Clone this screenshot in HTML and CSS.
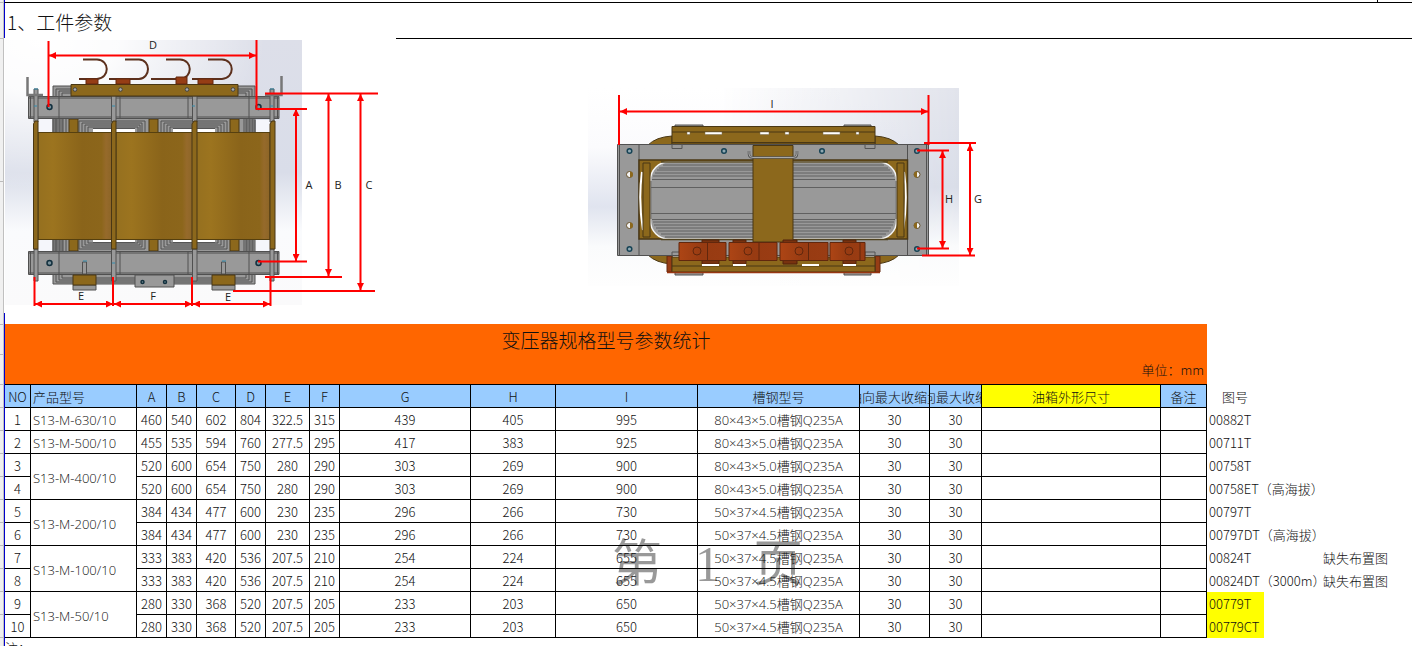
FILE: index.html
```html
<!DOCTYPE html>
<html lang="zh-CN">
<head>
<meta charset="utf-8">
<title>变压器规格型号参数统计</title>
<link rel="stylesheet" href="styles.css">
</head>
<body>
<div class="workbook">
<div class="row-headers" aria-hidden="true"><i class="h-first"></i><i class="h-title"></i><i class="h-figure"></i><i class="h-figure"></i><i class="h-banner"></i><i class="h-banner"></i><i></i><i></i><i></i><i></i><i></i><i></i><i></i><i></i><i></i><i></i><i></i><i></i></div>
<main class="sheet">
<div class="previous-row"></div>
<h1 class="section-title">1、工件参数</h1>
<section class="figures">
<svg class="front-view" viewBox="4 38 392 275" width="392" height="275" role="img" aria-label="变压器正视图">
<defs>
<linearGradient id="bg1" x1="0" y1="0" x2="0" y2="1"><stop offset="0" stop-color="#dddfe9"/><stop offset=".5" stop-color="#d9dde9"/><stop offset=".72" stop-color="#fafbfd"/><stop offset="1" stop-color="#fafafb"/></linearGradient>
<radialGradient id="bg2" gradientUnits="userSpaceOnUse" cx="40" cy="40" r="150" gradientTransform="translate(-20 0) scale(1.5 1)"><stop offset="0" stop-color="#fff"/><stop offset=".35" stop-color="#fff" stop-opacity=".9"/><stop offset="1" stop-color="#fff" stop-opacity="0"/></radialGradient>
<linearGradient id="coil"><stop offset="0" stop-color="#95701f"/><stop offset=".2" stop-color="#9c741f"/><stop offset=".6" stop-color="#8a641a"/><stop offset=".86" stop-color="#8c661b"/><stop offset=".92" stop-color="#966a2b"/><stop offset="1" stop-color="#8c6526"/></linearGradient>
<marker id="arrow" viewBox="0 0 6 6" refX="6" refY="3" markerWidth="7" markerHeight="7" markerUnits="userSpaceOnUse" orient="auto-start-reverse"><path d="M0 0L6 3L0 6z" fill="#f00"/></marker>
</defs>
<path d="M5 40H302V305H5z" fill="url(#bg1)"/><path d="M5 40H302V305H5z" fill="url(#bg2)"/>
<g class="steel"><path d="M53 86H255V284H53z"/><path d="M56 89H252V282H56zM59 91H249V280H59zM62 93H246V278H62z"/><path d="M55 119V251M57 119V251M60 119V251M63 119V251M66 119V251M244 119V251M247 119V251M250 119V251M253 119V251"/><path d="M79 121H145V249H79zM82 123H142V247H82zM85 125H140V245H85zM88 127H138V243H88zM161 121H227V249H161zM164 123H224V247H164zM167 125H221V245H167zM170 127H218V243H170z"/></g>
<path d="M93 129H135V242H93zM173 129H215V242H173z" fill="#fff"/>
<path d="M93 128.500H135M173 128.500H215M93 242.500H135M173 242.500H215M53 119V251M40 120V132M255 120V132" stroke="#555"/>
<path d="M39 120H52V132H39zM39 240H52V251H39zM256 120H270V132H256zM256 240H270V251H256z" fill="#f5f6fb"/>
<g class="brass"><path d="M69 119H78V251H69zM149 119H158V251H149zM230 119H239V251H230z"/></g>
<g fill="url(#coil)" stroke="#56400f"><path d="M38 132.500H112V239.500H38z"/><path d="M116 132.500H193V239.500H116z"/><path d="M196 132.500H270V239.500H196z"/></g>
<g class="steel"><path d="M28.500 96.500H279V118.500H28.500zM28.500 251.500H279V274.500H28.500z"/><path d="M28 98H279M28 117H279M28 253H279M28 273H279M30.500 96V119M59 96V119M120 96V119M188 96V119M249 96V119M277.500 96V119M30.500 251V275M59 251V275M120 251V275M188 251V275M249 251V275M277.500 251V275"/><path d="M34 89H38V122H34zM111.500 96H116V122H111.500zM192.500 96H197V122H192.500zM270 89H274V122H270zM34 249H38V281H34zM111.500 249H116V281H111.500zM192.500 249H197V281H192.500zM270 249H274V281H270z"/><path d="M82.500 262H86.500V274H82.500zM221.500 262H225.500V274H221.500z"/><path d="M73 285H96V290H73zM212 285H235V290H212zM135 275H174V287H135z"/></g>
<g class="brass"><path d="M71 84.500H238V96H71z"/><path d="M33.500 124L35 121H38V249H33.500zM111.500 124L113 121H116V249H111.500zM192 124L194 121H197V249H192zM270 124L272 121H275V249H270z"/><path d="M73 275H96V285H73zM212 275H235V285H212z"/></g>
<g class="hook"><path d="M83 59.500H97C110 60 110 78 97 79H79"/><path d="M125 59.500H139C151 60 151 78 139 79H109"/><path d="M166 59.500H180C193 60 193 78 180 79H151"/><path d="M208 59.500H222C235 60 235 78 222 79H192"/></g>
<path d="M86 79H98V84H86zM116 79H130V84H116zM176 77H187V84H176zM198 79H213V84H198z" fill="#963d15" stroke="#65290f"/>
<path d="M27.500 77V95H43M281.500 76V95H265" fill="none" stroke="#777" stroke-width="2.500"/>
<path d="M34 89H38M270 89H274M34 106H37M112 106H115M192 106H195M270 106H273M112 263H115M83 261H87M222 261H226" stroke="#328cad"/>
<g fill="#aaa" stroke="#444"><circle cx="75" cy="89.500" r="1.800"/><circle cx="120.500" cy="89.500" r="1.800"/><circle cx="187" cy="89.500" r="1.800"/><circle cx="233" cy="89.500" r="1.800"/></g>
<g fill="#78909a" stroke="#122f3d" stroke-width="1.500"><circle cx="49.500" cy="107" r="2.500"/><circle cx="258.500" cy="107" r="2.500"/><circle cx="49.500" cy="263" r="2.500"/><circle cx="258.500" cy="263" r="2.500"/><circle cx="142.500" cy="282" r="1.500"/><circle cx="165" cy="282" r="1.500"/></g>
<g class="leader"><path d="M48.500 41V107M256.500 40V109H307M265 93.500H378M258 261.500H307M265 277H342M233 291H375M34.500 277V306M113 277V306M192 277V306M270.500 276V306"/></g>
<g class="dimension"><path d="M49 55.500H256"/><path d="M296 109V261"/><path d="M328.500 94V276"/><path d="M360.500 94V290"/><path d="M35 304H113"/><path d="M114 304H192"/><path d="M193 304H270"/></g>
<g class="label"><text x="153" y="49">D</text><text x="309" y="189">A</text><text x="338" y="189">B</text><text x="369" y="189">C</text><text x="81" y="300">E</text><text x="153" y="300">F</text><text x="228" y="301">E</text></g>
</svg>
<div class="right-cells">
<svg class="top-view" viewBox="588 88 410 200" width="410" height="200" role="img" aria-label="变压器俯视图">
<defs>
<linearGradient id="bg3" x1="0" y1="0" x2="0" y2="1"><stop offset="0" stop-color="#fff"/><stop offset=".3" stop-color="#fbfbfd"/><stop offset=".6" stop-color="#e0e4ef"/><stop offset=".8" stop-color="#fafbfc"/><stop offset="1" stop-color="#fefefe"/></linearGradient>
<linearGradient id="bg4" x1="0" y1="0" x2="0" y2="1"><stop offset="0" stop-color="#e2e4ec"/><stop offset=".5" stop-color="#d9dde8"/><stop offset=".8" stop-color="#fafbfc"/><stop offset="1" stop-color="#fefefe"/></linearGradient>
<linearGradient id="fade"><stop offset="0" stop-color="#fff" stop-opacity="0"/><stop offset="1" stop-color="#fff"/></linearGradient>
<mask id="right-fade"><path d="M720 88H959V286H720z" fill="url(#fade)"/></mask>
<linearGradient id="terminal"><stop offset="0" stop-color="#ad4515"/><stop offset=".5" stop-color="#973b12"/><stop offset="1" stop-color="#9a3c13"/></linearGradient>
</defs>
<path d="M588 88H959V286H588z" fill="url(#bg3)"/><path d="M720 88H959V286H720z" fill="url(#bg4)" mask="url(#right-fade)"/>
<g class="brass"><path d="M648 145Q656 137 672 136V145zM899 145Q891 137 875 136V145zM648 255Q656 263 672 264V255zM899 255Q891 263 875 264V255z"/></g>
<g class="steel"><path d="M675 125H703V128H675zM844 125H871V128H844zM675 271H703V275H675zM844 271H871V275H844z"/></g>
<path d="M667 256H672V272H667zM875 256H880V272H875z" fill="#963d15" stroke="#65290f"/>
<g class="brass"><path d="M672 126.500H875V144H672zM672 257H875V272H672z"/><path d="M672 132H875M672 142.500H875M672 266H875"/></g>
<path d="M667 272.500H880" stroke="#973611" stroke-width="1.500"/>
<path d="M705 132H722V134.500H705zM760 132H769V134.500H760zM785 132H789V134.500H785zM687 132H690V134.500H687zM823 132H840V134.500H823zM856 132H859V134.500H856z" fill="#fff" stroke="#75694c" stroke-width=".5"/>
<g class="steel"><path d="M617.500 144.500H928.500V255.500H617.500z"/><path d="M619.500 144V256M926.500 144V256M639 144V256M907.500 144V256"/></g>
<path d="M639 160H907.500V239H639z" fill="#8c681c" stroke="#493714" stroke-width="1.500"/>
<path d="M642 172Q638 200 643 230M904 172Q908 200 903 230" fill="none" stroke="#fff" stroke-width="2"/>
<rect x="650.500" y="162" width="246" height="77" rx="18" fill="#999" stroke="#f4f4f4" stroke-width="1.500"/>
<g stroke="#606060"><path d="M663 165H884M659 168H888M657 170H890M655 173H892M653 176H894M652 179.500H895M651 187.500H896M651 213.500H896M652 219.500H895M653 222H894M654 225H893M656 228H891M658 231H889M661 234H886M665 237H882M651 181V219M896 181V219"/></g>
<path d="M661 162H888M661 239.500H888" stroke="#4f421f" stroke-width="1.500"/>
<g class="brass"><path d="M643 163H650V237H643zM897 163H904V237H897z"/><path d="M753 145.500H793V242H753z"/><path d="M753 157.500H793"/></g>
<path d="M749 151V154Q749 157.500 753 157.500H793Q797 157.500 797 154V151" fill="none" stroke="#555" stroke-width="2.500"/><path d="M749 151V154Q749 157.500 753 157.500H793Q797 157.500 797 154V151" fill="none" stroke="#aaa"/>
<path d="M672 144V148.500H682V144M865 144V148.500H875V144M672 256V252H682V256M865 256V252H875V256" fill="none" stroke="#555"/>
<path d="M702 240H719V264H702zM733 240H746V264H733zM783 240H797V264H783zM843 240H856V264H843z" fill="#78320f" stroke="#52220c"/>
<g fill="url(#terminal)" stroke="#61270d"><path d="M679 242.500H726V260.500H679z"/><path d="M729 242.500H777V260.500H729z"/><path d="M780 242.500H828V260.500H780z"/><path d="M830 242.500H865V260.500H830z"/></g>
<path d="M707.500 242V261M759 242V261M808.500 242V261M860 242V261" stroke="#61270d"/>
<g fill="none" stroke="#61270d"><circle cx="697" cy="251" r="4"/><circle cx="748" cy="251" r="4"/><circle cx="799" cy="251" r="4"/><circle cx="849" cy="251" r="4"/></g>
<path d="M702 264H719V266H702zM733 264H746V266H733zM802 264H819V266H802zM843 264H856V266H843z" fill="#fff"/>
<g fill="#8fa8b2" stroke="#174355" stroke-width="1.500"><circle cx="629.500" cy="151" r="2.300"/><circle cx="724" cy="151" r="2.300"/><circle cx="822" cy="151" r="2.300"/><circle cx="917" cy="151" r="2.300"/><circle cx="629.500" cy="249" r="2.300"/><circle cx="917" cy="249" r="2.300"/></g>
<g fill="#f5f5f5" stroke="#67512a"><circle cx="629.500" cy="174.500" r="3"/><circle cx="629.500" cy="225.500" r="3"/><circle cx="917" cy="174.500" r="3"/><circle cx="917" cy="225.500" r="3"/></g>
<path d="M630 171.500a3 3 0 0 1 0 6zM630 222.500a3 3 0 0 1 0 6zM917 171.500a3 3 0 0 0 0 6zM917 222.500a3 3 0 0 0 0 6z" fill="#8c681c"/>
<g class="leader"><path d="M619 95V145M928.500 95V145M924 143H976M922 255.500H975M917 150.500H949M917 248.500H949"/></g>
<g class="dimension"><path d="M620 111.500H928"/><path d="M942.500 151V248"/><path d="M970 144V255"/></g>
<g class="label"><text x="772" y="108">I</text><text x="949" y="203">H</text><text x="978" y="203">G</text></g>
</svg>
</div>
</section>
<section class="spec">
<p class="watermark" aria-hidden="true"><span>第</span><span>1</span><span>页</span></p>
<table>
<colgroup><col class="c-no"><col class="c-model"><col class="c-s"><col class="c-s"><col class="c-c"><col class="c-s"><col class="c-e"><col class="c-s"><col class="c-g"><col class="c-h"><col class="c-i"><col class="c-steel"><col class="c-axial"><col class="c-radial"><col class="c-tank"><col class="c-note"><col class="c-drawing"><col class="c-drawing"><col></colgroup>
<thead>
<tr class="banner title"><th colspan="16">变压器规格型号参数统计</th></tr>
<tr class="banner unit"><th colspan="16">单位：mm</th></tr>
<tr class="heads"><th>NO</th><th class="left">产品型号</th><th>A</th><th>B</th><th>C</th><th>D</th><th>E</th><th>F</th><th>G</th><th>H</th><th>I</th><th>槽钢型号</th><th><div class="clip">轴向最大收缩量</div></th><th><div class="clip">径向最大收缩量</div></th><th class="mark">油箱外形尺寸</th><th>备注</th><th class="plain">图号</th></tr>
</thead>
<tbody>
<tr><td>1</td><td class="left code">S13-M-630/10</td><td>460</td><td>540</td><td>602</td><td>804</td><td>322.5</td><td>315</td><td>439</td><td>405</td><td>995</td><td class="code">80×43×5.0槽钢Q235A</td><td>30</td><td>30</td><td></td><td></td><td class="side">00882T</td></tr>
<tr><td>2</td><td class="left code">S13-M-500/10</td><td>455</td><td>535</td><td>594</td><td>760</td><td>277.5</td><td>295</td><td>417</td><td>383</td><td>925</td><td class="code">80×43×5.0槽钢Q235A</td><td>30</td><td>30</td><td></td><td></td><td class="side">00711T</td></tr>
<tr><td>3</td><td class="left code" rowspan="2">S13-M-400/10</td><td>520</td><td>600</td><td>654</td><td>750</td><td>280</td><td>290</td><td>303</td><td>269</td><td>900</td><td class="code">80×43×5.0槽钢Q235A</td><td>30</td><td>30</td><td></td><td></td><td class="side">00758T</td></tr>
<tr><td>4</td><td>520</td><td>600</td><td>654</td><td>750</td><td>280</td><td>290</td><td>303</td><td>269</td><td>900</td><td class="code">80×43×5.0槽钢Q235A</td><td>30</td><td>30</td><td></td><td></td><td class="side">00758ET（高海拔）</td></tr>
<tr><td>5</td><td class="left code" rowspan="2">S13-M-200/10</td><td>384</td><td>434</td><td>477</td><td>600</td><td>230</td><td>235</td><td>296</td><td>266</td><td>730</td><td class="code">50×37×4.5槽钢Q235A</td><td>30</td><td>30</td><td></td><td></td><td class="side">00797T</td></tr>
<tr><td>6</td><td>384</td><td>434</td><td>477</td><td>600</td><td>230</td><td>235</td><td>296</td><td>266</td><td>730</td><td class="code">50×37×4.5槽钢Q235A</td><td>30</td><td>30</td><td></td><td></td><td class="side">00797DT（高海拔）</td></tr>
<tr><td>7</td><td class="left code" rowspan="2">S13-M-100/10</td><td>333</td><td>383</td><td>420</td><td>536</td><td>207.5</td><td>210</td><td>254</td><td>224</td><td>655</td><td class="code">50×37×4.5槽钢Q235A</td><td>30</td><td>30</td><td></td><td></td><td class="side">00824T</td><td class="side"></td><td class="side">缺失布置图</td></tr>
<tr><td>8</td><td>333</td><td>383</td><td>420</td><td>536</td><td>207.5</td><td>210</td><td>254</td><td>224</td><td>655</td><td class="code">50×37×4.5槽钢Q235A</td><td>30</td><td>30</td><td></td><td></td><td class="side">00824DT（3000m）</td><td class="side"></td><td class="side">缺失布置图</td></tr>
<tr><td>9</td><td class="left code" rowspan="2">S13-M-50/10</td><td>280</td><td>330</td><td>368</td><td>520</td><td>207.5</td><td>205</td><td>233</td><td>203</td><td>650</td><td class="code">50×37×4.5槽钢Q235A</td><td>30</td><td>30</td><td></td><td></td><td class="side mark">00779T</td></tr>
<tr><td>10</td><td>280</td><td>330</td><td>368</td><td>520</td><td>207.5</td><td>205</td><td>233</td><td>203</td><td>650</td><td class="code">50×37×4.5槽钢Q235A</td><td>30</td><td>30</td><td></td><td></td><td class="side mark">00779CT</td></tr>
</tbody>
</table>
<p class="footnote">注：</p>
</section>
</main>
</div>
</body>
</html>
```
FILE: styles.css
```css
* { box-sizing: border-box; }
body {
  margin: 0;
  background: #fff;
  color: #111;
  font: 300 13px/22px "Noto Sans CJK SC", sans-serif;
}
.workbook { display: flex; height: 100vh; overflow: hidden; }

.row-headers {
  flex: none;
  width: 4px;
  display: flex;
  flex-direction: column;
  background: #f0f0f0;
  border-right: 1px solid #c0c0c0;
}
.row-headers i { flex: none; height: 23px; border-bottom: 1px solid #bbb; }
.row-headers .h-first { height: 3px; }
.row-headers .h-title { height: 36px; }
.row-headers .h-figure { height: 143px; }
.row-headers .h-banner { height: 30px; }

.sheet { flex: 1; min-width: 0; }
.previous-row {
  height: 2px;
  border-left: 1px solid #00c;
  background: linear-gradient(#000, #000) right 34px top / 1px 2px no-repeat;
}
.section-title {
  margin: 0;
  padding: 2px 0 0 2px;
  border-top: 1px solid #000;
  border-left: 1px solid #00c;
  font-size: 19px;
  font-weight: 300;
  line-height: 33px;
}

.figures { display: flex; height: 275px; }
.figures svg { display: block; flex: none; }
.right-cells {
  flex: 1;
  padding: 49px 0 0 192px;
  border-top: 1px solid #000;
}
.steel path { fill: #999; stroke: #505050; }
.brass path { fill: #8c681c; stroke: #493714; }
.hook path { fill: none; stroke: #5c301d; stroke-width: 2; }
.leader path { fill: none; stroke: #f00; stroke-width: 2; }
.dimension path {
  fill: none;
  stroke: #f00;
  stroke-width: 2;
  marker-start: url(#arrow);
  marker-end: url(#arrow);
}
.label text {
  font: 400 11px "Open Sans", sans-serif;
  text-anchor: middle;
  fill: #222;
}

.spec {
  position: relative;
  z-index: 0;
  padding-top: 11px;
  border-left: 1px solid #00c;
}
table {
  width: 100%;
  table-layout: fixed;
  border-collapse: separate;
  border-spacing: 0;
}
.c-no { width: 26px; }
.c-model { width: 106px; }
.c-s { width: 30px; }
.c-c { width: 39px; }
.c-e { width: 44px; }
.c-g { width: 131px; }
.c-h { width: 85px; }
.c-i { width: 142px; }
.c-steel { width: 162px; }
.c-axial { width: 70px; }
.c-radial { width: 52px; }
.c-tank { width: 179px; }
.c-note { width: 46px; }
.c-drawing { width: 57px; }

th, td {
  height: 23px;
  padding: 2px 0 0;
  border-right: 1px solid #000;
  border-bottom: 1px solid #000;
  font-weight: 300;
  line-height: 20px;
  text-align: center;
  white-space: nowrap;
}
.left { padding-left: 2px; text-align: left; }
.code { font-family: "Open Sans", "Noto Sans CJK SC", sans-serif; }
.banner th { height: 30px; border: 0; background: #f60; }
.title th { font-size: 19px; line-height: 28px; }
.unit th {
  height: 31px;
  padding-right: 3px;
  border-bottom: 1px solid #000;
  text-align: right;
}
.heads th { background: #9cf; }
.heads .plain { border-color: transparent; background: none; }
.heads .mark, td.mark { background: #ff0; }
.clip { display: flex; justify-content: center; overflow: hidden; }
td.side { padding-left: 2px; border-color: transparent; text-align: left; }

.watermark {
  position: absolute;
  z-index: -1;
  top: 215px;
  left: 607px;
  display: flex;
  gap: 33px;
  margin: 0;
  color: #999;
  font: 400 50px/72px "Liberation Serif", "Noto Sans CJK SC", serif;
}
.footnote { margin: 0; line-height: 20px; }
```
